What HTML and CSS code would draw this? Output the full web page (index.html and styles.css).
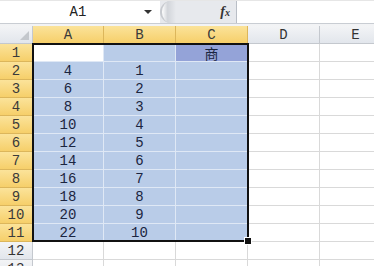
FILE: index.html
```html
<!DOCTYPE html>
<html lang="zh-CN">
<head>
  <meta charset="UTF-8">
  <title>Sheet1</title>
  <link rel="stylesheet" href="styles.css">
</head>
<body>
  <div class="formula-bar">
    <div class="name-box">
      <span class="ref">A1</span>
      <span class="drop"></span>
    </div>
    <div class="fx-area">
      <span class="grip"></span>
      <span class="fx">f<sub>x</sub></span>
    </div>
    <div class="formula-input"></div>
  </div>
  <div class="spacer"></div>

  <div class="sheet">
    <!-- header row -->
    <div class="corner"><span class="tri"></span></div>
    <div class="col-head sel">A</div>
    <div class="col-head sel">B</div>
    <div class="col-head sel">C</div>
    <div class="col-head">D</div>
    <div class="col-head">E</div>

    <div class="row-head sel">1</div>
    <div class="cell active"></div>
    <div class="cell in"></div>
    <div class="cell in hl">商</div>
    <div class="cell"></div><div class="cell"></div>

    <div class="row-head sel">2</div>
    <div class="cell in">4</div><div class="cell in">1</div><div class="cell in"></div>
    <div class="cell"></div><div class="cell"></div>

    <div class="row-head sel">3</div>
    <div class="cell in">6</div><div class="cell in">2</div><div class="cell in"></div>
    <div class="cell"></div><div class="cell"></div>

    <div class="row-head sel">4</div>
    <div class="cell in">8</div><div class="cell in">3</div><div class="cell in"></div>
    <div class="cell"></div><div class="cell"></div>

    <div class="row-head sel">5</div>
    <div class="cell in">10</div><div class="cell in">4</div><div class="cell in"></div>
    <div class="cell"></div><div class="cell"></div>

    <div class="row-head sel">6</div>
    <div class="cell in">12</div><div class="cell in">5</div><div class="cell in"></div>
    <div class="cell"></div><div class="cell"></div>

    <div class="row-head sel">7</div>
    <div class="cell in">14</div><div class="cell in">6</div><div class="cell in"></div>
    <div class="cell"></div><div class="cell"></div>

    <div class="row-head sel">8</div>
    <div class="cell in">16</div><div class="cell in">7</div><div class="cell in"></div>
    <div class="cell"></div><div class="cell"></div>

    <div class="row-head sel">9</div>
    <div class="cell in">18</div><div class="cell in">8</div><div class="cell in"></div>
    <div class="cell"></div><div class="cell"></div>

    <div class="row-head sel">10</div>
    <div class="cell in">20</div><div class="cell in">9</div><div class="cell in"></div>
    <div class="cell"></div><div class="cell"></div>

    <div class="row-head sel">11</div>
    <div class="cell in">22</div><div class="cell in">10</div><div class="cell in"></div>
    <div class="cell"></div><div class="cell"></div>

    <div class="row-head">12</div>
    <div class="cell"></div><div class="cell"></div><div class="cell"></div>
    <div class="cell"></div><div class="cell"></div>

    <div class="row-head">13</div>
    <div class="cell"></div><div class="cell"></div><div class="cell"></div>
    <div class="cell"></div><div class="cell"></div>

    <!-- selection frame over A1:C11 -->
    <div class="selection"><span class="handle"></span></div>
  </div>
</body>
</html>
```

FILE: styles.css
```css
body {
  margin: 0;
  width: 374px;
  height: 266px;
  overflow: hidden;
  background: #fff;
  font-family: "Liberation Mono", "Noto Sans CJK SC", monospace;
  color: #1f2a44;
}

.formula-bar {
  display: flex;
  height: 22px;
  border-top: 1px solid #e6e6e6;
  border-bottom: 1px solid #c9cdd3;
  background: #fff;
}

.name-box {
  width: 160px;
  display: flex;
  align-items: center;
  position: relative;
}

.name-box .ref {
  flex: 1;
  text-align: center;
  font-size: 14px;
  color: #222;
  padding-left: 12px;
}

.name-box .drop {
  width: 0;
  height: 0;
  border-left: 4px solid transparent;
  border-right: 4px solid transparent;
  border-top: 4px solid #333;
  margin-right: 8px;
}

.fx-area {
  width: 76px;
  display: flex;
  align-items: center;
  background: #e7e9ed;
  border-right: 1px solid #b9bec6;
}

.fx-area .grip {
  width: 14px;
  height: 22px;
  border-radius: 0 0 0 0;
  background: linear-gradient(90deg, #fff 0, #d2d5da 40%, #e7e9ed 100%);
  border-left: 2px solid #c7cacf;
  border-top-left-radius: 11px;
  border-bottom-left-radius: 11px;
}

.fx-area .fx {
  margin-left: auto;
  margin-right: 6px;
  font-family: "Liberation Serif", serif;
  font-style: italic;
  font-weight: bold;
  font-size: 14px;
  color: #333;
}

.fx-area .fx sub {
  font-size: 10px;
  vertical-align: 0;
}

.formula-input {
  flex: 1;
}

.spacer {
  height: 2px;
  background: #f2f3f5;
}

.sheet {
  position: relative;
  display: grid;
  grid-template-columns: 33px 71px 72px 72px 72px 72px;
  grid-auto-rows: 18px;
  font-size: 14px;
}

.corner,
.col-head,
.row-head {
  background: linear-gradient(#f3f4f6, #e2e6ec);
  border-right: 1px solid #c4c8ce;
  border-bottom: 1px solid #c4c8ce;
  box-sizing: border-box;
  display: flex;
  align-items: center;
  justify-content: center;
  color: #333;
}

.corner {
  position: relative;
}

.corner .tri {
  position: absolute;
  right: 3px;
  bottom: 3px;
  width: 0;
  height: 0;
  border-left: 9px solid transparent;
  border-bottom: 9px solid #c3c7cc;
}

.col-head.sel,
.row-head.sel {
  background: linear-gradient(#fbe39a, #f6cf6a);
  border-right-color: #dcb65b;
  border-bottom-color: #dcb65b;
  color: #3a3a3a;
}

.row-head {
  justify-content: center;
}

.cell {
  box-sizing: border-box;
  border-right: 1px solid #d9d9d9;
  border-bottom: 1px solid #d9d9d9;
  display: flex;
  align-items: center;
  justify-content: center;
  color: #1b2540;
}

.cell.in {
  background: #b9cce8;
  border-right-color: #dfe8f5;
  border-bottom-color: #dfe8f5;
}

.cell.hl {
  background: #94a3d8;
}

.cell.active {
  background: #fff;
  border-right-color: #dfe8f5;
  border-bottom-color: #dfe8f5;
}

.selection {
  position: absolute;
  left: 32px;
  top: 17px;
  width: 217px;
  height: 199px;
  border: 2px solid #111;
  box-sizing: border-box;
  pointer-events: none;
}

.selection .handle {
  position: absolute;
  right: -5px;
  bottom: -5px;
  width: 6px;
  height: 6px;
  background: #111;
  border: 1px solid #fff;
}
```
